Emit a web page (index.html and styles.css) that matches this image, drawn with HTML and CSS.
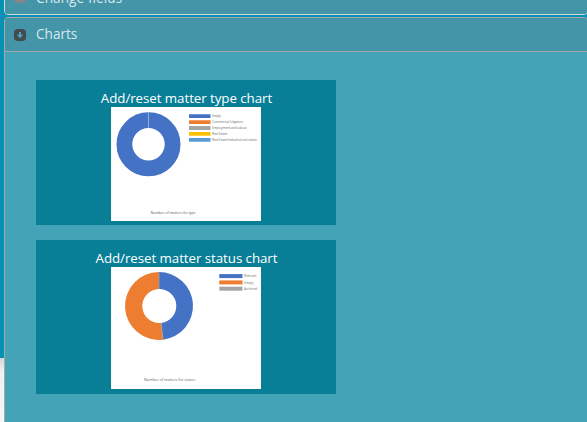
FILE: index.html
```html
<!DOCTYPE html>
<html lang="en">
<head>
<meta charset="utf-8">
<title>Charts</title>
<link rel="stylesheet" href="styles.css">
</head>
<body>
<main class="accordion">
  <section class="panel panel-fields">
    <header class="panel-header">
      <svg class="icon" viewBox="0 0 12 12"><rect width="12" height="12" rx="4" fill="#858787"/></svg>
      <span class="panel-title">Change fields</span>
    </header>
  </section>
  <section class="panel panel-charts">
    <header class="panel-header">
      <svg class="icon" viewBox="0 0 12 12"><rect width="12" height="12" rx="3.8" fill="#444b4f"/><path d="M5 3h2v2.8h2.2L6 9.2 2.8 5.8H5z" fill="#4aa5b8"/></svg>
      <span class="panel-title">Charts</span>
    </header>
    <div class="panel-body">
      <button class="card card-type">
        <span class="card-title">Add/reset matter type chart</span>
        <svg class="chart" width="150" height="114" viewBox="0 0 150 114">
          <rect width="150" height="114" fill="#fff"/>
          <circle cx="37.5" cy="37.3" r="24.1" fill="none" stroke="#4472c4" stroke-width="15.8"/>
          <path d="M37.5 5.3v16" stroke="#a3bce2" stroke-width=".8"/>
          <g stroke-width="3.8">
            <path d="M78 9.2h21.5" stroke="#4472c4"/>
            <path d="M78 15.1h21.5" stroke="#ed7d31"/>
            <path d="M78 21h21.5" stroke="#a5a5a5"/>
            <path d="M78 26.9h21.5" stroke="#ffc000"/>
            <path d="M78 32.8h21.5" stroke="#5b9bd5"/>
          </g>
          <g class="legend">
            <text x="101" y="10.3" textLength="9">Empty</text>
            <text x="101" y="16.2" textLength="31">Commercial Litigation</text>
            <text x="101" y="22.1" textLength="35">Employment and Labour</text>
            <text x="101" y="28" textLength="15.5">Real Estate</text>
            <text x="101" y="33.9" textLength="45">Real Estate Industrial real estate</text>
          </g>
          <text class="caption" x="39.5" y="107.3" textLength="45.5">Number of matters for type</text>
        </svg>
      </button>
      <button class="card card-status">
        <span class="card-title">Add/reset matter status chart</span>
        <svg class="chart" width="150" height="122" viewBox="0 0 150 122">
          <rect width="150" height="122" fill="#fff"/>
          <path d="M48 5a34 34 0 0 1 4.1 67.75L50.1 55.9A17 17 0 0 0 48 22z" fill="#4472c4"/>
          <path d="M52.1 72.75A34 34 0 1 1 48 5V22A17 17 0 1 0 50.1 55.9z" fill="#ed7d31"/>
          <path d="M48 5v17M50.1 55.9l2 16.8" stroke="#a5a5a5" stroke-width=".8"/>
          <g stroke-width="4">
            <path d="M108.3 9.1h23.2" stroke="#4472c4"/>
            <path d="M108.3 15.4h23.2" stroke="#ed7d31"/>
            <path d="M108.3 21.7h23.2" stroke="#a5a5a5"/>
          </g>
          <g class="legend">
            <text x="133" y="10.2" textLength="12.5">Relevant</text>
            <text x="133" y="16.5" textLength="9.5">Empty</text>
            <text x="133" y="22.8" textLength="13">Archived</text>
          </g>
          <text class="caption" x="33" y="113.6" textLength="51">Number of matters for status</text>
        </svg>
      </button>
    </div>
  </section>
</main>
</body>
</html>
```
FILE: styles.css
```css
* { box-sizing: border-box; }
body {
  margin: 0;
  height: 422px;
  overflow: hidden;
  font-family: "Open Sans", "Noto Sans", sans-serif;
  background: linear-gradient(#0590b4 0 358px, #d4d4d4 358px, #f1f1f1 372px, #f6f6f6 422px);
}
.accordion {
  width: 584px;
  margin-left: 4px;
  display: flex;
  flex-direction: column;
  gap: 2px;
}
.panel {
  border: 1px solid #a5aaa9;
  border-radius: 4px;
  overflow: hidden;
  background: #44a3b7;
}
.panel-fields {
  height: 36px;
  margin-top: -21px;
  border-color: #d5dad8;
}
.panel-charts {
  height: 420px;
}
.panel-header {
  height: 34px;
  display: flex;
  align-items: center;
  gap: 10px;
  padding-left: 9px;
  background: #4495a7;
  border-bottom: 1px solid #a2abac;
}
.panel-fields .panel-header {
  border-bottom: 0;
}
.icon {
  width: 12px;
  height: 12px;
}
.panel-title {
  padding-bottom: 2px;
  font-size: 13.6px;
  line-height: 18px;
  color: #d5e8ed;
}
.panel-fields .panel-title {
  padding: 2px 0 0;
  letter-spacing: 0.08px;
}
.panel-body {
  display: flex;
  flex-direction: column;
  gap: 15px;
  padding: 28px 31px;
}
.card {
  width: 300px;
  display: flex;
  flex-direction: column;
  align-items: center;
  padding: 9px 0 0;
  border: 0;
  background: #087e97;
  color: #fff;
  font-family: inherit;
}
.card-type { height: 145px; }
.card-status { height: 154px; }
.card-title {
  height: 18px;
  padding-left: 1px;
  font-size: 13.33px;
  line-height: 18px;
  letter-spacing: -0.06px;
  white-space: nowrap;
}
.chart {
  display: block;
  flex: none;
}
.legend {
  font-size: 3.4px;
  fill: #777;
}
.caption {
  font-size: 3.9px;
  fill: #666;
}
```
